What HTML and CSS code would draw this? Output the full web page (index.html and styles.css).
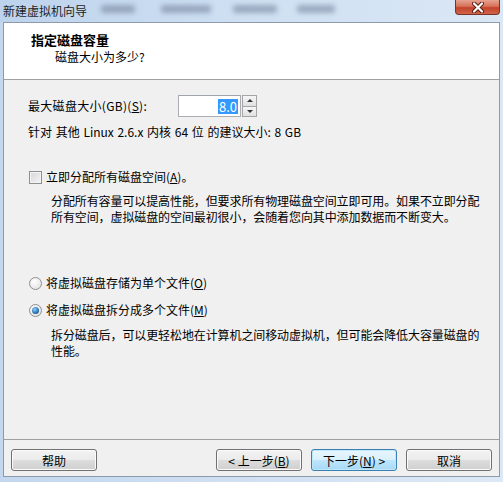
FILE: index.html
```html
<!DOCTYPE html>
<html>
<head>
  <title>新建虚拟机向导</title>
  <link rel="stylesheet" href="styles.css">
</head>
<body>
  <div class="window">
    <div class="titlebar">
      <span class="title">新建虚拟机向导</span>
      <span class="ghost g1"></span>
      <span class="ghost g2"></span>
      <span class="ghost g3"></span>
      <span class="ghost g4"></span>
      <span class="close">
        <svg width="14" height="11" viewBox="0 0 14 11">
          <path d="M3 1.5 L11 9.5 M11 1.5 L3 9.5" stroke="#5a1a10" stroke-width="4" stroke-linecap="round"/>
          <path d="M3 1.5 L11 9.5 M11 1.5 L3 9.5" stroke="#ffffff" stroke-width="2.2" stroke-linecap="round"/>
        </svg>
      </span>
    </div>

    <div class="dialog">
      <div class="header">
        <div class="head-title">指定磁盘容量</div>
        <div class="head-sub">磁盘大小为多少?</div>
      </div>

      <div class="content">
        <div class="size-row">
          <label class="size-label">最大磁盘大小(GB)(<u>S</u>):</label>
          <div class="spin">
            <div class="spin-input"><span class="sel">8.0</span></div>
            <div class="spin-btns">
              <div class="spin-btn"><span class="tri-up"></span></div>
              <div class="spin-btn"><span class="tri-down"></span></div>
            </div>
          </div>
        </div>
        <div class="hint">针对 其他 Linux 2.6.x 内核 64 位 的建议大小: 8 GB</div>

        <div class="check-row">
          <span class="checkbox"></span>
          <span>立即分配所有磁盘空间(<u>A</u>)。</span>
        </div>
        <div class="desc desc-alloc">分配所有容量可以提高性能，但要求所有物理磁盘空间立即可用。如果不立即分配<br>所有空间，虚拟磁盘的空间最初很小，会随着您向其中添加数据而不断变大。</div>

        <div class="radio-row first">
          <span class="radio"></span>
          <span>将虚拟磁盘存储为单个文件(<u>O</u>)</span>
        </div>
        <div class="radio-row second">
          <span class="radio checked"></span>
          <span>将虚拟磁盘拆分成多个文件(<u>M</u>)</span>
        </div>
        <div class="desc desc-split">拆分磁盘后，可以更轻松地在计算机之间移动虚拟机，但可能会降低大容量磁盘的<br>性能。</div>
      </div>

      <div class="footer">
        <button class="btn">帮助</button>
        <div class="nav">
          <button class="btn">&lt; 上一步(<u>B</u>)</button>
          <button class="btn default">下一步(<u>N</u>) &gt;</button>
          <button class="btn">取消</button>
        </div>
      </div>
    </div>
  </div>
</body>
</html>
```

FILE: styles.css
```css
body {
  margin: 0;
  font-family: "Noto Sans CJK SC", "Microsoft YaHei", sans-serif;
  font-size: 12px;
  color: #000;
}

.window {
  width: 503px;
  height: 482px;
  display: flex;
  flex-direction: column;
  background: linear-gradient(to right, #c3d7ee, #d3e2f3 60%, #dce8f5);
  overflow: hidden;
}

.titlebar {
  height: 22px;
  display: flex;
  align-items: flex-start;
  background: linear-gradient(to right, #bdd3ec, #cfe0f2 50%, #dae7f5);
}

.title {
  margin: 3px 0 0 3px;
  line-height: 16px;
  color: #1e1e1e;
}

.ghost {
  height: 8px;
  margin-top: 5px;
  background: rgba(90, 105, 130, 0.45);
  filter: blur(2.5px);
  border-radius: 3px;
}

.g1 { width: 34px; margin-left: 14px; }
.g2 { width: 50px; margin-left: 26px; }
.g3 { width: 44px; margin-left: 22px; }
.g4 { width: 38px; margin-left: 20px; }

.close {
  margin-left: auto;
  margin-right: 3px;
  width: 45px;
  height: 15px;
  box-sizing: border-box;
  border: 1px solid #7a3326;
  border-top: none;
  border-radius: 0 0 4px 4px;
  background: linear-gradient(to bottom, #e6a392, #d77159 45%, #c2432a 55%, #d0664a);
  display: flex;
  justify-content: center;
  align-items: center;
}

.dialog {
  flex: 1;
  margin: 0 3px 5px 3px;
  border: 1px solid #8d9aab;
  background: #f0f0f0;
  display: flex;
  flex-direction: column;
}

.header {
  height: 57px;
  box-sizing: border-box;
  background: #fff;
  border-bottom: 1px solid #a0a0a0;
  padding: 9px 0 0 27px;
  line-height: 16px;
}

.head-title {
  font-size: 13px;
  font-weight: bold;
}

.head-sub {
  margin-top: 1px;
  padding-left: 24px;
}

.content {
  padding: 15px 0 0 24px;
  line-height: 16px;
}

.size-row {
  display: flex;
  align-items: center;
  height: 22px;
}

.size-label {
  width: 150px;
  letter-spacing: 0.3px;
}

.spin {
  display: flex;
  height: 22px;
}

.spin-input {
  width: 63px;
  box-sizing: border-box;
  border: 1px solid #abadb3;
  border-top-color: #a0a4ad;
  background: #fff;
  display: flex;
  justify-content: flex-end;
  align-items: center;
  padding-right: 2px;
}

.sel {
  background: #3399ff;
  color: #fff;
  line-height: 15px;
  padding: 0 1px;
  font-size: 13px;
}

.spin-btns {
  width: 15px;
  display: flex;
  flex-direction: column;
  margin-left: 1px;
}

.spin-btn {
  flex: 1;
  border: 1px solid #a5a5a5;
  background: linear-gradient(to bottom, #f6f6f6, #e0e0e0);
  display: flex;
  justify-content: center;
  align-items: center;
}

.spin-btn + .spin-btn {
  border-top: none;
}

.tri-up {
  border: 3px solid transparent;
  border-top: none;
  border-bottom: 3px solid #333;
}

.tri-down {
  border: 3px solid transparent;
  border-bottom: none;
  border-top: 3px solid #333;
}

.hint {
  margin-top: 7px;
  word-spacing: 1px;
}

.check-row,
.radio-row {
  display: flex;
  align-items: center;
}

.check-row {
  margin-top: 29px;
}

.checkbox {
  width: 11px;
  height: 11px;
  margin: 0 4px 0 1px;
  border: 1px solid #8e8f8f;
  background: linear-gradient(135deg, #d6d6d6, #f4f4f4);
  box-shadow: inset 0 0 0 1px #f4f4f4;
}

.desc {
  padding-left: 23px;
  margin-top: 8px;
  letter-spacing: -0.1px;
}

.radio-row.first {
  margin-top: 50px;
}

.radio-row.second {
  margin-top: 11px;
}

.radio {
  width: 11px;
  height: 11px;
  margin: 0 4px 0 1px;
  border: 1px solid #8e8f8f;
  border-radius: 50%;
  background: radial-gradient(circle at 40% 35%, #ffffff, #dcdcdc);
  position: relative;
}

.radio.checked::after {
  content: "";
  position: absolute;
  left: 2px;
  top: 2px;
  width: 7px;
  height: 7px;
  border-radius: 50%;
  background: radial-gradient(circle at 40% 35%, #8fd3ff, #1b5c9e 70%);
}

.desc-split {
  margin-top: 9px;
}

.footer {
  margin-top: auto;
  border-top: 1px solid #a0a0a0;
  padding: 9px 7px 5px 7px;
  display: flex;
  justify-content: space-between;
}

.nav {
  display: flex;
  gap: 9px;
}

.btn {
  width: 86px;
  height: 22px;
  padding: 0;
  font-family: inherit;
  font-size: 12px;
  color: #000;
  border: 1px solid #707070;
  border-radius: 3px;
  background: linear-gradient(to bottom, #f2f2f2, #ebebeb 50%, #dddddd 51%, #cfcfcf);
  box-shadow: inset 0 0 0 1px #fbfbfb;
}

.btn.default {
  border-color: #3c7fb1;
  background: linear-gradient(to bottom, #eaf6fd, #d9f0fc 50%, #bee6fd 51%, #a7d9f5);
  box-shadow: inset 0 0 0 1px #c0e8fc;
}
```
